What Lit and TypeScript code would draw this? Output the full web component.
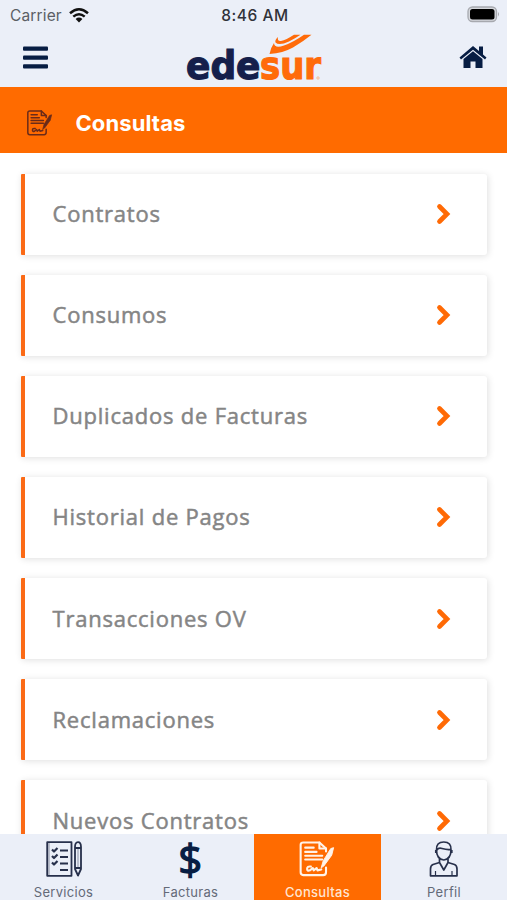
import { LitElement, html, css } from "lit";
import { customElement, property } from "lit/decorators.js";

const documentIcon = html`<svg viewBox="0 0 38 38" width="100%" height="100%" fill="none" stroke="currentColor" stroke-width="2.200" stroke-linejoin="round" stroke-linecap="round">
  <path d="M28 28V33Q28 36 25 36H4Q1.200 36 1.200 33V4Q1.200 1.500 4 1.500H21L28 8V11"/>
  <path d="M21 1.500V8H28"/>
  <path d="M6 7H15M6 11.500H18M6 15.500H24M6 19.500H24"/>
  <path d="M23 28L25 21L33 8L36 7L34 15L26 26Z" fill="currentColor" stroke-width="1"/>
  <path d="M12 27Q8 26.500 8 29.500Q8 32 11 31L14 28.500L15 31L18 28.500L19 31L23 30"/>
</svg>`;

const servicesIcon = html`<svg viewBox="0 0 36 36" width="36" height="36" fill="none" stroke="currentColor" stroke-width="1.800" stroke-linejoin="round">
  <path d="M1.200 1.200H25.500V34.800H1.200Z" />
  <path d="M3 2V34" stroke-width="1" opacity=".5"/>
  <path d="M14 9.500H22M14 16H22M14 22.500H22M14 29H22"/>
  <path d="M6 8.500L8 10.500L11.500 7M6 15L8 17L11.500 13.500M6 21.500L8 23.500L11.500 20" stroke-width="2.200"/>
  <path d="M29 6Q29 1.200 32 1.200Q35 1.200 35 6V28L32 34.500L29 28ZM29 7H35M29 27H35"/>
  <path d="M32 8V27" stroke-width="1" opacity=".5"/>
</svg>`;

const profileIcon = html`<svg viewBox="0 0 30 36" width="30" height="36" fill="none" stroke="currentColor" stroke-width="1.700" stroke-linejoin="round">
  <path d="M7.500 9Q7 1 14.800 1Q22.500 1 22 9Q22 18 14.800 19Q7.500 18 7.500 9ZM8 9Q9.500 6.500 13 7.500Q18 9 21.500 8.500"/>
  <path d="M6.800 9V12M22.800 9V12"/>
  <path d="M10.500 17.500V21.500L14.800 29L19 21.500V17.500M10.500 21.500L4 23.500Q1.500 24.500 1.500 28V34.800H28V28Q28 24.500 25.500 23.500L19 21.500"/>
  <path d="M6.500 30V34.500M23 30V34.500" stroke-width="1.200"/>
</svg>`;

@customElement("menu-card")
class MenuCard extends LitElement {
  @property() label = "";
  static styles = css`
    :host { display: flex; flex: none; box-sizing: border-box; height: 81.100px; align-items: center; justify-content: space-between; padding: 0 36px 0 27.500px; border-left: 4px solid #fb6a16; background: #fff; border-radius: 1px 3px 3px 1px; box-shadow: 1px 1px 7px rgba(0, 0, 0, .13); }
    .label { font: 400 22px/30px "Open Sans", sans-serif; -webkit-text-stroke: .5px #858585; letter-spacing: .78px; color: #858585; white-space: nowrap; margin-top: -2px; }
    .arrow { display: block; }
  `;
  render() {
    return html`<span class="label">${this.label}</span>
      <svg class="arrow" width="15" height="22" viewBox="0 0 15 22"><path d="M3.500 3.500L11 11L3.500 18.500" fill="none" stroke="#ff6a05" stroke-width="4.700" stroke-linecap="round"/></svg>`;
  }
}

@customElement("app-root")
class AppRoot extends LitElement {
  static styles = css`
    :host { display: flex; flex-direction: column; width: 507px; height: 900px; overflow: hidden; background: #fff; font-family: Inter, sans-serif; color: #071d43; }
    .top { flex: none; height: 87px; background: #ebeff8; display: flex; flex-direction: column; }
    .status { height: 30px; display: grid; grid-template-columns: 1fr auto 1fr; align-items: center; padding: 0 7px 0 10px; font-size: 15.500px; box-sizing: border-box; }
    .carrier { display: flex; align-items: center; gap: 7px; color: #5b5e65; letter-spacing: .15px; }
    .clock { color: #303238; letter-spacing: .55px; font-weight: 500; }
    .battery { justify-self: end; margin-top: -2px; }
    .bar { flex: 1; display: flex; justify-content: space-between; align-items: flex-start; padding: 0 20px 0 23px; }
    .burger { margin-top: 16px; }
    .logo { margin: 0 0 0 3px; overflow: visible; }
    .brand { font: 700 39px "DejaVu Sans", sans-serif; stroke-width: 1.200px; }
    .navy { fill: #151f4b; stroke: #151f4b; }
    .orange { fill: #ff6b0a; stroke: #ff6b0a; }
    .house { margin-top: 15px; }
    svg { display: block; }
    .title { flex: none; height: 66px; background: #ff6b00; color: #fff; display: flex; align-items: center; box-sizing: border-box; padding: 6px 27px 0; gap: 22.500px; font-size: 22px; font-weight: 700; }
    .titleIcon { width: 26px; height: 26px; color: #6a2b19; }
    .titleText { letter-spacing: .1px; }
    .list { flex: 1; min-height: 0; overflow: hidden; display: flex; flex-direction: column; gap: 20px; padding: 20.600px 20px 0 21px; }
    .tabs { flex: none; height: 66px; display: grid; grid-template-columns: 254px 127px 126px; background: #ebeff8; }
    .pair { display: grid; grid-template-columns: 1fr 1fr; }
    .tab { display: flex; flex-direction: column; align-items: center; padding-top: 7px; font-size: 13px; line-height: 16px; letter-spacing: .3px; color: #646a78; box-sizing: border-box; }
    .glyph { height: 36px; margin-bottom: 7px; color: #27304b; }
    .dollar { font: 400 42px/35px "Open Sans", sans-serif; color: #071d43; -webkit-text-stroke: 1.300px #071d43; }
    .active { background: #ff6b00; color: #ffe5d2; font-weight: 500; }
    .active .glyph { width: 37px; color: #fff3e9; }
  `;
  items = ["Contratos", "Consumos", "Duplicados de Facturas", "Historial de Pagos", "Transacciones OV", "Reclamaciones", "Nuevos Contratos"];
  render() {
    return html`
      <header class="top">
        <div class="status">
          <div class="carrier">Carrier
            <svg width="20" height="15" viewBox="0 0 20 15" fill="none" stroke="#111" stroke-width="2.500"><path d="M1 5.200Q10-2.600 19 5.200M4.300 8.600Q10 3.800 15.700 8.600"/><path d="M6.600 11Q10 8.200 13.400 11L10 14.500Z" fill="#111" stroke="none"/></svg>
          </div>
          <div class="clock">8:46 AM</div>
          <svg class="battery" width="33" height="17" viewBox="0 0 33 17"><rect x="1" y="1" width="28.500" height="14.500" rx="4.500" fill="#d5d7dc" stroke="#a7a9af" stroke-width="1.300"/><rect x="3" y="3" width="24.500" height="10.500" rx="2.500" fill="#000"/><path d="M31 6Q33 8.200 31 10.500Z" fill="#a7a9af"/></svg>
        </div>
        <div class="bar">
          <svg class="burger" width="25" height="24" viewBox="0 0 25 24" fill="#071d43"><rect y="0.500" width="25" height="4.200" rx="1"/><rect y="9.500" width="25" height="4.200" rx="1"/><rect y="18.300" width="25" height="4.200" rx="1"/></svg>
          <svg class="logo" width="138" height="57" viewBox="0 0 138 57">
            <text class="brand navy" x="0" y="49.400" textLength="74.500" lengthAdjust="spacingAndGlyphs">ede</text>
            <text class="brand orange" x="74" y="49.400" textLength="61" lengthAdjust="spacingAndGlyphs">sur</text>
            <circle cx="132" cy="48" r="1.200" fill="none" stroke="#ff9b5a" stroke-width=".6"/>
            <path d="M88 13Q84.500 18 83.500 24Q97 23 107 17.500Q118 11 125.500 4.800H118Q107 12.500 98 15.500Q88.500 19 88 13Z" fill="#ff6b0a"/>
            <path d="M92 7Q88.500 10 89.500 12.500Q93 16 103 11.500Q110 8 114.500 4.800H108Q100 10 95 11Q91 11.500 92 7Z" fill="#ff6b0a"/>
          </svg>
          <svg class="house" width="28" height="24" viewBox="0 0 28 24" fill="#071d43"><path d="M14 1L20 6V1.500H24V9.500L27.500 12.500L26 14.500L14 4.800L2 14.500L.5 12.500Z"/><path d="M14 6.300L23.500 14V23H16.500V16.500H11.500V23H4.500V14Z"/></svg>
        </div>
      </header>
      <div class="title"><div class="titleIcon">${documentIcon}</div><span class="titleText">Consultas</span></div>
      <main class="list">${this.items.map(i => html`<menu-card .label=${i}></menu-card>`)}</main>
      <nav class="tabs">
        <div class="pair">
          <div class="tab"><div class="glyph">${servicesIcon}</div>Servicios</div>
          <div class="tab"><div class="glyph dollar">$</div>Facturas</div>
        </div>
        <div class="tab active"><div class="glyph">${documentIcon}</div>Consultas</div>
        <div class="tab"><div class="glyph">${profileIcon}</div>Perfil</div>
      </nav>`;
  }
}
